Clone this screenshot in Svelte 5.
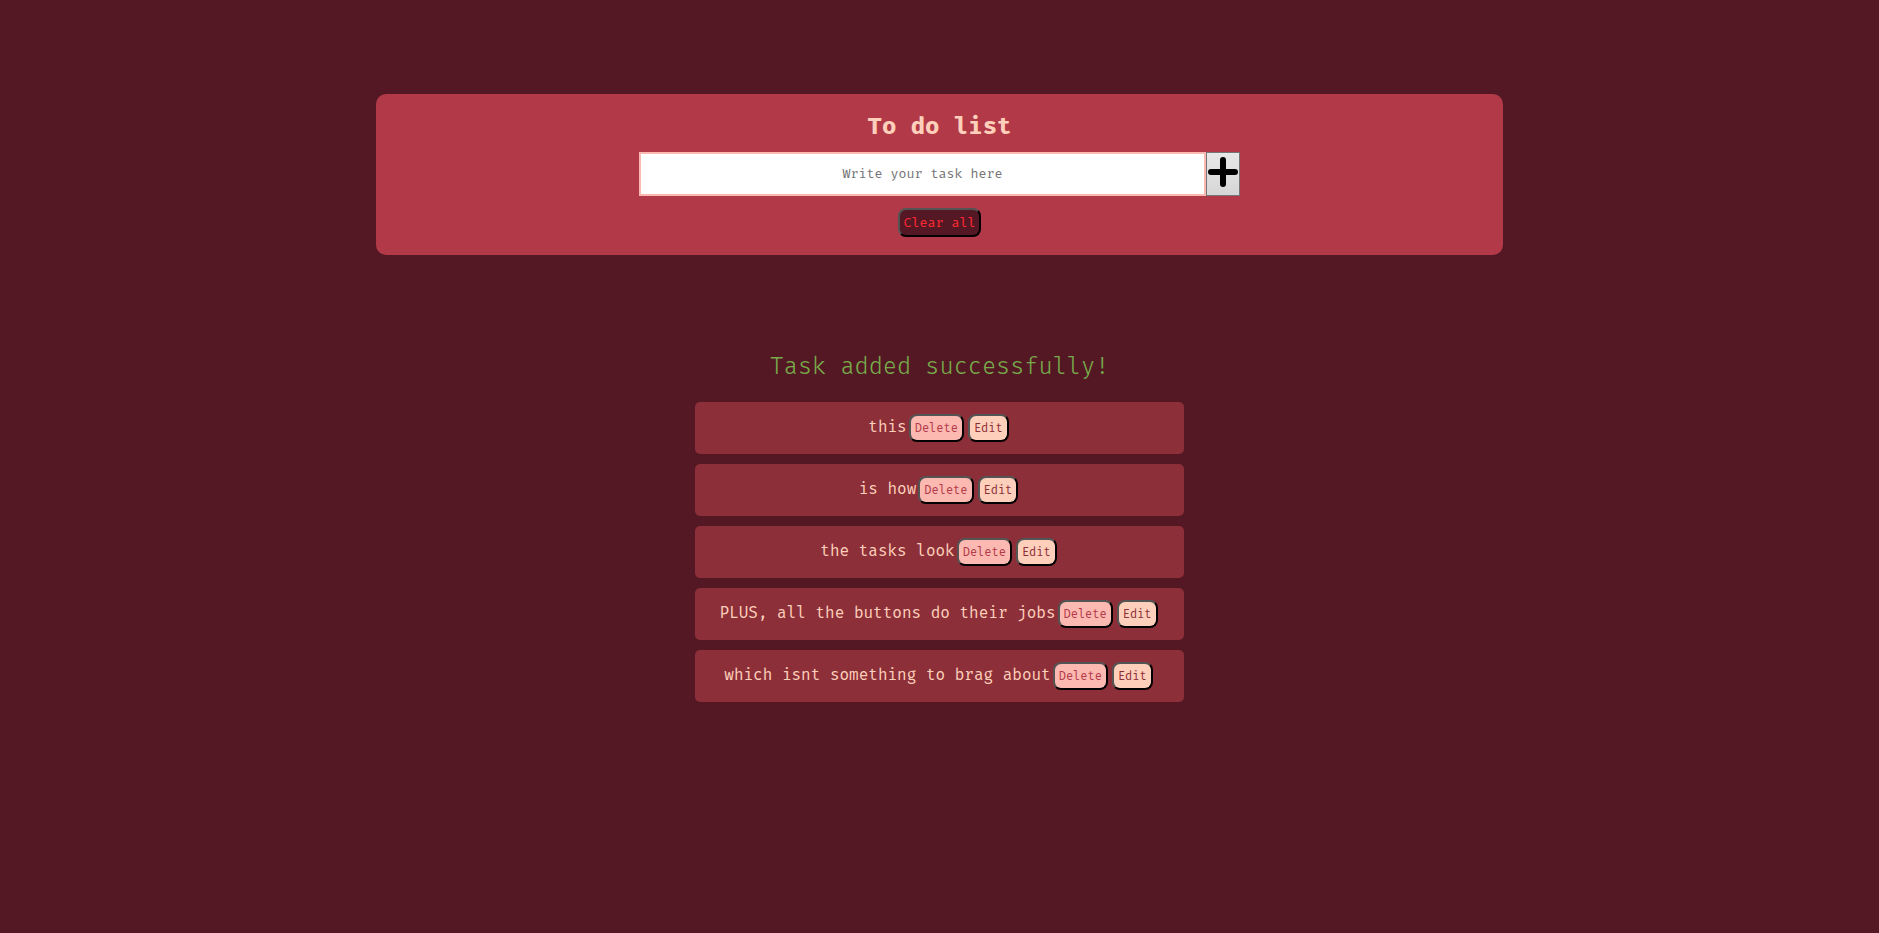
<script>
  let tasks = $state([
    'this',
    'is how',
    'the tasks look',
    'PLUS, all the buttons do their jobs',
    'which isnt something to brag about'
  ]);
  let draft = $state('');
  let message = $state('Task added successfully!');

  function addTask(event) {
    event.preventDefault();
    const text = draft.trim();
    if (!text) return;
    tasks.push(text);
    draft = '';
    message = 'Task added successfully!';
  }

  function removeTask(index) {
    tasks.splice(index, 1);
    message = '';
  }

  function editTask(index) {
    draft = tasks[index];
    tasks.splice(index, 1);
    message = '';
  }

  function clearAll() {
    tasks = [];
    message = '';
  }
</script>

<header>
  <h1>To do list</h1>
  <form onsubmit={addTask}>
    <input type="text" placeholder="Write your task here" aria-label="Task" bind:value={draft} />
    <button class="add" type="submit" aria-label="Add task">
      <svg viewBox="0 0 30 30" width="30" height="30" aria-hidden="true">
        <path d="M15 3V27M3 15H27" fill="none" stroke="#000" stroke-width="6" stroke-linecap="round" />
      </svg>
    </button>
  </form>
  <button class="btn clear" type="button" onclick={clearAll}>Clear all</button>
</header>

<main>
  <p class="message" role="status">{message}</p>
  <ul>
    {#each tasks as task, i}
      <li>
        <span>{task}</span>
        <button class="btn delete" type="button" onclick={() => removeTask(i)}>Delete</button>
        <button class="btn edit" type="button" onclick={() => editTask(i)}>Edit</button>
      </li>
    {/each}
  </ul>
</main>

<style>
  :global(body) {
    background: #531823;
    color: #fed0bb;
    font-family: 'Fira Mono', 'Fira Code', 'DejaVu Sans Mono', monospace;
    font-size: 16px;
  }

  header {
    box-sizing: border-box;
    width: 60%;
    margin: 5% auto 0;
    padding: 16px 0 18px;
    display: flex;
    flex-direction: column;
    align-items: center;
    background: #b23a48;
    border-radius: 10px;
  }

  h1 {
    margin: 0 0 10px;
    font-size: 24px;
    line-height: 32px;
    font-weight: 700;
  }

  form {
    display: flex;
    width: 32vw;
    height: 44px;
    margin-bottom: 12px;
  }

  input {
    flex: 1;
    min-width: 0;
    box-sizing: border-box;
    padding: 0 8px;
    border: 2px solid #fcb9b2;
    border-radius: 0;
    background: #fff;
    font-family: inherit;
    text-align: center;
  }

  input::placeholder {
    color: #757575;
  }

  .add {
    display: flex;
    justify-content: center;
    align-items: flex-start;
    width: 34px;
    padding: 4px 0 0;
    border: 1px solid #767676;
    border-radius: 0;
    background: linear-gradient(#e8e8e8, #d6d6d6);
  }

  .add svg {
    flex: none;
  }

  .btn {
    box-sizing: border-box;
    padding: 0 4px;
    border: 2px outset #000;
    border-radius: 8px;
    font-family: inherit;
  }

  .clear {
    height: 29px;
    padding-top: 2px;
    background: #531823;
    color: #ff2a36;
  }

  .delete,
  .edit {
    height: 28px;
    margin: 0 2px;
    font-size: 12px;
  }

  .delete {
    background: #fcb9b2;
    color: #b23a48;
  }

  .edit {
    background: #fed0bb;
    color: #8c2f39;
  }

  .message {
    margin: 96px 0 19px;
    min-height: 32px;
    color: #78aa4b;
    font-family: 'Fira Code', 'Liberation Mono', monospace;
    font-size: 23px;
    font-weight: 300;
    line-height: 32px;
    text-align: center;
  }

  ul {
    width: 26%;
    margin: 0 auto;
    padding: 0;
    list-style: none;
    display: flex;
    flex-direction: column;
    gap: 10px;
  }

  li {
    display: flex;
    justify-content: center;
    align-items: center;
    min-height: 52px;
    background: #8c2f39;
    border-radius: 5px;
  }

  span {
    white-space: nowrap;
    line-height: 20px;
    padding-bottom: 2px;
  }
</style>
